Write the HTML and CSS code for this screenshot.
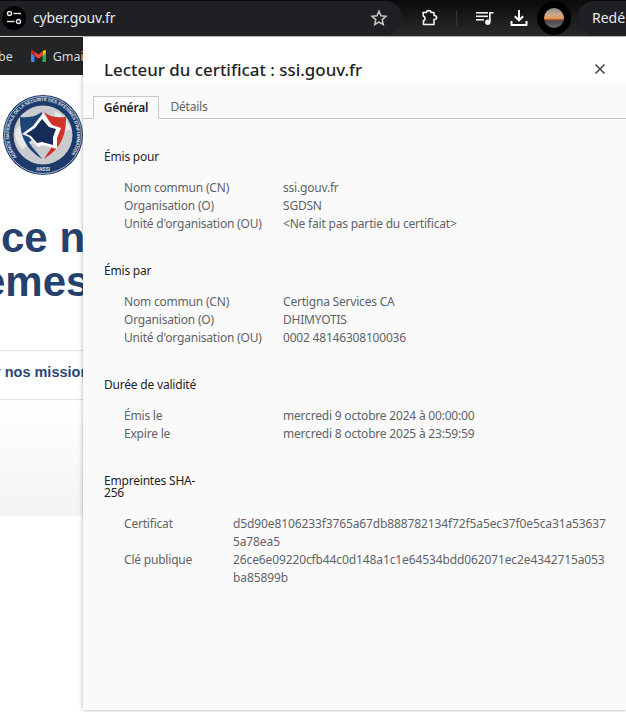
FILE: index.html
```html
<!DOCTYPE html>
<html lang="fr">
<head>
    <meta charset="UTF-8">
    <meta name="viewport" content="width=device-width, initial-scale=1.0">
    <title>Lecteur du certificat</title>
    <link rel="stylesheet" href="styles.css">
</head>
<body>
    <div class="toolbar">
        <div class="omnibox">
            <span class="site-info">
                <svg width="20" height="20" viewBox="0 0 20 20" fill="none" stroke="#e8eaed" stroke-width="1.4">
                    <circle cx="5.5" cy="5.5" r="2"/>
                    <path d="M9.5 5.5H17"/>
                    <circle cx="14.5" cy="13.5" r="2"/>
                    <path d="M3 13.5h7.5"/>
                </svg>
            </span>
            <span class="url">cyber.gouv.fr</span>
            <svg class="star" width="18" height="18" viewBox="0 0 18 18" fill="none" stroke="#c4c7c5" stroke-width="1.5">
                <path d="M9 2.2l2 4.6 5 .5-3.8 3.3 1.1 4.9L9 13l-4.3 2.5 1.1-4.900L2 7.300l5-.5z"/>
            </svg>
        </div>
        <svg class="tool-puzzle" width="18" height="18" viewBox="0 0 18 18" fill="none" stroke="#f1f3f4" stroke-width="1.6" stroke-linejoin="round">
            <path d="M2 3.500H5.500C5.500 1 10 1 10 3.500H13V6.500C16.500 6.500 16.500 10.500 13 10.500V15.500H2.500V11.500C4.500 11.500 4.500 7.500 2.500 7.500z"/>
        </svg>
        <span class="tool-sep"></span>
        <svg class="tool-media" width="18" height="16" viewBox="0 0 18 16" fill="#f1f3f4">
            <rect x="0" y="2" width="12" height="1.600"/>
            <rect x="0" y="5.500" width="12" height="1.600"/>
            <rect x="0" y="9" width="8" height="1.600"/>
            <rect x="13" y="2" width="4.500" height="1.600"/>
            <rect x="13" y="2" width="1.700" height="10"/>
            <circle cx="11.800" cy="12.200" r="2.700"/>
        </svg>
        <svg class="tool-download" width="18" height="18" viewBox="0 0 18 18" fill="none" stroke="#fff" stroke-width="2">
            <path d="M9 1v10M4.800 7.200L9 11.400l4.200-4.200"/>
            <path d="M1.500 12v4h15v-4" stroke-linejoin="round"/>
        </svg>
        <span class="avatar-ring"><span class="avatar"></span></span>
        <span class="restart">Redé</span>
    </div>

    <div class="page">
        <div class="bookmarks">
            <span class="bookmark-end">be</span>
            <svg class="gmail" width="15" height="12" viewBox="0 0 15 12">
                <path d="M0 2.500V11a1 1 0 0 0 1 1h2.500V5.500z" fill="#4285f4"/>
                <path d="M15 2.500V11a1 1 0 0 1-1 1h-2.500V5.500z" fill="#34a853"/>
                <path d="M11.500 1.500V6l3.500-2.700V1.300c0-1-1.200-1.600-2-1z" fill="#fbbc04"/>
                <path d="M3.500 5.800V1.500l4 3 4-3V5.800l-4 3z" fill="#ea4335"/>
                <path d="M0 1.300v2L3.500 6V1.500L2 .3c-.8-.6-2 0-2 1z" fill="#c5221f"/>
            </svg>
            <span class="bookmark-name">Gmai</span>
        </div>

        <div class="logo-row">
            <svg class="logo" width="80" height="80" viewBox="0 0 80 80">
                <defs>
                    <path id="ring-arc" d="M14 62A34 34 0 1 1 66 62"/>
                </defs>
                <circle cx="40" cy="40" r="40" fill="#1d3a6b"/>
                <circle cx="40" cy="40" r="38.500" fill="none" stroke="#e8ecf2" stroke-width=".7"/>
                <circle cx="40" cy="40" r="29.500" fill="#c9cbce"/>
                <path d="M12 36c6-8 14-14 22-17l2 14-8 16-9 5c-5-5-7-12-7-18zM52 16c7 3 13 9 16 18l-9 4-8-8z" fill="#e6e7e9"/>
                <text class="logo-ring-text"><textPath href="#ring-arc" textLength="150">AGENCE NATIONALE DE LA SÉCURITÉ DES SYSTÈMES D'INFORMATION</textPath></text>
                <text class="logo-ring-text" x="40" y="76" text-anchor="middle">ANSSI</text>
                <path d="M39 17C32 22 23 23 17 22c0 16 3 30 22 42-4-6-10-11-13-17l7-4-1-9 8-4z" fill="#1f4478"/>
                <path d="M41 17c6 5 15 6 22 5 0 16-3 30-22 42 4-7 9-13 12-19l-2-6-2-8z" fill="#d3322c"/>
                <path d="M40 18l9 12 9 3-4 10 0 11-14-4-5 2-9-10-7-3 11-8z" fill="#fff"/>
                <path d="M39 24l7 8 7 2-3 8 0 8-11-3-5 1-6-7-5-2 9-6z" fill="#142c57"/>
            </svg>
        </div>

        <div class="hero-title">
            <div class="hero-line-a">ce n</div>
            <div class="hero-line-b">emes</div>
        </div>

        <div class="missions">
            <span class="missions-text">r nos mission</span>
        </div>

        <div class="grey-band"></div>
    </div>

    <div class="dialog">
        <div class="dialog-head">
            <h1 class="dialog-title">Lecteur du certificat : ssi.gouv.fr</h1>
            <svg class="dialog-close" width="12" height="12" viewBox="0 0 12 12" stroke="#44474a" stroke-width="1.600">
                <path d="M1.500 1.500l9 9M10.500 1.500l-9 9"/>
            </svg>
        </div>
        <div class="dialog-body">
            <div class="tabs">
                <span class="tab tab-active">Général</span>
                <span class="tab">Détails</span>
            </div>

            <section class="cert-section">
                <h2 class="cert-title">Émis pour</h2>
                <div class="cert-rows">
                    <span class="cert-label">Nom commun (CN)</span><span class="cert-value">ssi.gouv.fr</span>
                    <span class="cert-label">Organisation (O)</span><span class="cert-value">SGDSN</span>
                    <span class="cert-label">Unité d'organisation (OU)</span><span class="cert-value">&lt;Ne fait pas partie du certificat&gt;</span>
                </div>
            </section>

            <section class="cert-section">
                <h2 class="cert-title">Émis par</h2>
                <div class="cert-rows">
                    <span class="cert-label">Nom commun (CN)</span><span class="cert-value">Certigna Services CA</span>
                    <span class="cert-label">Organisation (O)</span><span class="cert-value">DHIMYOTIS</span>
                    <span class="cert-label">Unité d'organisation (OU)</span><span class="cert-value">0002 48146308100036</span>
                </div>
            </section>

            <section class="cert-section">
                <h2 class="cert-title">Durée de validité</h2>
                <div class="cert-rows">
                    <span class="cert-label">Émis le</span><span class="cert-value">mercredi 9 octobre 2024 à 00:00:00</span>
                    <span class="cert-label">Expire le</span><span class="cert-value">mercredi 8 octobre 2025 à 23:59:59</span>
                </div>
            </section>

            <section class="cert-section">
                <h2 class="cert-title cert-title-wrap">Empreintes SHA-256</h2>
                <div class="cert-rows cert-rows-hash">
                    <span class="cert-label">Certificat</span><span class="cert-value cert-hash">d5d90e8106233f3765a67db888782134f72f5a5ec37f0e5ca31a536375a78ea5</span>
                    <span class="cert-label">Clé publique</span><span class="cert-value cert-hash">26ce6e09220cfb44c0d148a1c1e64534bdd062071ec2e4342715a053ba85899b</span>
                </div>
            </section>
        </div>
    </div>
</body>
</html>
```

FILE: styles.css
```css
html, body {
    height: 100%;
}

body {
    margin: 0;
    position: relative;
    overflow: hidden;
    background: #fff;
    font-family: "Noto Sans", sans-serif;
    display: flex;
    flex-direction: column;
}

svg {
    display: block;
    flex-shrink: 0;
}

.toolbar {
    height: 37px;
    flex-shrink: 0;
    box-sizing: border-box;
    display: flex;
    align-items: center;
    background: linear-gradient(#0b0b0b, #2a2a2a);
    border-bottom: 1px solid #d0d0d0;
}

.omnibox {
    width: 402px;
    height: 34px;
    flex-shrink: 0;
    margin-top: -1px;
    box-sizing: border-box;
    padding-left: 2px;
    padding-right: 14px;
    display: flex;
    align-items: center;
    background: #1f2023;
    border-radius: 0 17px 17px 0;
}

.site-info {
    width: 24px;
    height: 24px;
    border-radius: 50%;
    background: #000;
    display: flex;
    align-items: center;
    justify-content: center;
}

.url {
    margin-left: 7px;
    font-size: 14px;
    letter-spacing: -0.15px;
    color: #e8eaed;
}

.star {
    margin-left: auto;
}

.tool-puzzle {
    margin-left: 19px;
}

.tool-sep {
    width: 1px;
    height: 16px;
    flex-shrink: 0;
    margin-left: 17px;
    background: #333;
}

.tool-media {
    margin-left: 19px;
}

.tool-download {
    margin-left: 16px;
}

.avatar-ring {
    width: 34px;
    height: 34px;
    flex-shrink: 0;
    margin-left: 9px;
    border-radius: 50%;
    background: #000;
    display: flex;
    align-items: center;
    justify-content: center;
}

.avatar {
    width: 20px;
    height: 20px;
    border-radius: 50%;
    background: linear-gradient(#8d8d88 0, #c9a98c 35%, #e89a55 52%, #b4552d 58%, #4a4a52 65%, #6d6e73 100%);
}

.restart {
    flex: 1 1 0;
    min-width: 0;
    margin-left: 7px;
    height: 34px;
    margin-top: -1px;
    padding-left: 14px;
    line-height: 34px;
    font-size: 14px;
    color: #e8eaed;
    white-space: nowrap;
    overflow: hidden;
    background: #1f2023;
    border-radius: 17px 0 0 17px;
}

.page {
    width: 83px;
    flex-grow: 1;
    overflow: hidden;
}

.bookmarks {
    height: 38px;
    display: flex;
    align-items: center;
    background: #232425;
    white-space: nowrap;
    font-size: 12.500px;
    color: #d6d8da;
}

.bookmark-end {
    margin-left: -2px;
}

.gmail {
    margin-left: 18px;
}

.bookmark-name {
    margin-left: 7px;
}

.logo-row {
    padding: 20px 0 0 3px;
}

.logo-ring-text {
    font-family: "Liberation Sans", sans-serif;
    font-size: 4.600px;
    font-weight: bold;
    fill: #dfe4ee;
}

.hero-title {
    margin-top: 41px;
    font-family: "Liberation Sans", sans-serif;
    font-weight: bold;
    font-size: 42px;
    line-height: 44px;
    color: #27416f;
    white-space: nowrap;
}

.hero-line-a {
    margin-left: 1px;
}

.hero-line-b {
    margin-left: -18px;
}

.missions {
    margin-top: 46px;
    height: 48px;
    border-top: 1px solid #dfe1e4;
    border-bottom: 1px solid #dfe1e4;
    font-family: "Liberation Sans", sans-serif;
    font-weight: bold;
    font-size: 14.500px;
    line-height: 42px;
    color: #2d4674;
    white-space: nowrap;
}

.missions-text {
    margin-left: -5px;
}

.grey-band {
    height: 116px;
    background: linear-gradient(#fff, #f1f3f4);
}

/* dialog lies over the page */
.dialog {
    position: absolute;
    left: 83px;
    right: 0;
    top: 37px;
    height: 673px;
    box-shadow: 0 0 4px rgba(0, 0, 0, 0.35);
    background: #fafafa;
}

.dialog-head {
    height: 45px;
    box-sizing: border-box;
    padding: 19px 20px 0 21px;
    background: #fff;
    display: flex;
    align-items: center;
    justify-content: space-between;
}

.dialog-title {
    margin: 0;
    font-size: 16.900px;
    font-weight: 500;
    color: #1f1f1f;
}

.dialog-body {
    font-size: 12px;
    letter-spacing: -0.2px;
}

.tabs {
    height: 37px;
    box-sizing: border-box;
    padding: 14px 0 0 10px;
    display: flex;
    border-bottom: 1px solid #c7c7c7;
}

.tab {
    width: 60px;
    height: 23px;
    box-sizing: border-box;
    line-height: 21px;
    text-align: center;
    color: #5f6368;
}

.tab-active {
    width: 66px;
    border: 1px solid #c7c7c7;
    border-bottom: 1px solid #fafafa;
    color: #1f1f1f;
    font-weight: 600;
}

.cert-section {
    padding: 31px 0 0 21px;
}

.cert-title {
    margin: 0;
    width: 100px;
    font-size: 12px;
    font-weight: 400;
    line-height: 14px;
    color: #1f1f1f;
}

.cert-title-wrap {
    margin-top: 1px;
    line-height: 12px;
}

.cert-rows {
    margin-top: 15px;
    padding-left: 20px;
    display: grid;
    grid-template-columns: 159px 1fr;
    line-height: 18px;
    color: #5f6368;
}

.cert-rows-hash {
    margin-top: 16px;
    grid-template-columns: 109px 1fr;
    padding-right: 18px;
}

.cert-hash {
    word-break: break-all;
    letter-spacing: -0.115px;
}
```
